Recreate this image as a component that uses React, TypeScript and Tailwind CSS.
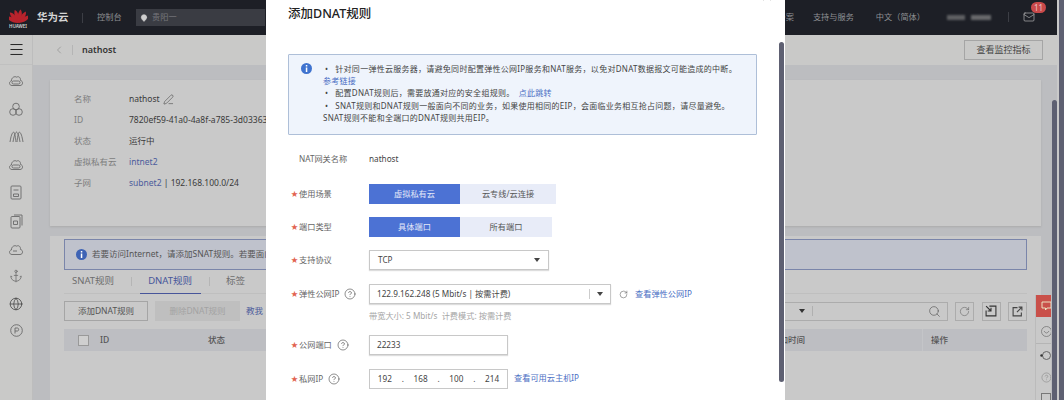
import { Anchor, ChevronLeft, CircleHelp, Globe, Mail, MapPin, Menu, PenLine, RotateCw, Search, X } from "lucide-react";

const font = "font-['Noto_Sans','Noto_Sans_CJK_SC',sans-serif]";

function HuaweiLogo() {
  const angles = [-60, -36, -12, 12, 36, 60];
  return (
    <svg width="19" height="14" viewBox="0 0 38 28">
      {angles.map((a) => (
        <path key={a} d="M19 28 C14 20 13 9 17 1 C22 3 25 16 19 28Z" fill="#b8232c" transform={`rotate(${a} 19 28)`} />
      ))}
    </svg>
  );
}

function CloudBox() {
  return (
    <svg width="16" height="14" viewBox="0 0 16 14" fill="none" stroke="#6a6a6a" strokeWidth="0.9">
      <path d="M4 11.5 C1 11.5 .6 7.5 3.4 7 C3.4 3.5 6.5 1.8 8.8 3.2 C10.3 1.8 13 3.6 12.4 6.4 C15.4 7 15.2 11.5 12 11.5Z" />
      <rect x="4" y="7" width="8" height="3" rx="1.5" />
    </svg>
  );
}

function Rings() {
  return (
    <svg width="14" height="15" viewBox="0 0 14 15" fill="none" stroke="#6a6a6a" strokeWidth="0.9">
      <circle cx="7" cy="4.5" r="3.3" />
      <circle cx="4" cy="10" r="3.3" />
      <circle cx="10" cy="10" r="3.3" />
    </svg>
  );
}

function Bridge() {
  return (
    <svg width="15" height="14" viewBox="0 0 15 14" fill="none" stroke="#6a6a6a" strokeWidth="0.9">
      <path d="M1 12 C2 6 3 3 4.5 2 C6 3 6.5 8 7 12 M4 12 C5 6 6 3 7.5 2 C9 3 10 6 11 12 M8 12 C8.5 8 9 3 10.5 2 C12 3 13 6 14 12" />
    </svg>
  );
}

function FileBox() {
  return (
    <svg width="12" height="15" viewBox="0 0 12 15" fill="none" stroke="#6a6a6a" strokeWidth="0.9">
      <rect x="1" y="1" width="10" height="13" rx="1" />
      <path d="M3.5 5 H8.5 M3.5 9 H8.5 V11.5 H3.5Z" />
    </svg>
  );
}

function FileCopy() {
  return (
    <svg width="13" height="15" viewBox="0 0 13 15" fill="none" stroke="#6a6a6a" strokeWidth="0.9">
      <rect x="1" y="2.5" width="9" height="11.5" rx="1" />
      <path d="M4 1 H12 V11.5 M3.5 7 H7.5 V10.5 H3.5Z" />
    </svg>
  );
}

function CloudLine() {
  return (
    <svg width="16" height="13" viewBox="0 0 16 13" fill="none" stroke="#6a6a6a" strokeWidth="0.9">
      <path d="M4 11.5 C1 11.5 .6 7.5 3.4 7 C3.4 3.5 6.5 1.8 8.8 3.2 C10.3 1.8 13 3.6 12.4 6.4 C15.4 7 15.2 11.5 12 11.5Z M5 8 H9" />
    </svg>
  );
}

function CircleP() {
  return (
    <svg width="13" height="13" viewBox="0 0 13 13" fill="none" stroke="#6a6a6a" strokeWidth="0.9">
      <circle cx="6.5" cy="6.5" r="5.8" />
      <path d="M5 9.5 V4 H7.5 C9 4 9 7 7.5 7 H5" />
    </svg>
  );
}

function InfoDot({ fill }: { fill: string }) {
  return (
    <svg width="11" height="11" viewBox="0 0 11 11" className="shrink-0">
      <circle cx="5.5" cy="5.5" r="5.5" fill={fill} />
      <rect x="4.8" y="2" width="1.5" height="1.5" fill="#fff" />
      <rect x="4.8" y="4.5" width="1.5" height="4.5" fill="#fff" />
    </svg>
  );
}

function Caret({ color = "#444" }: { color?: string }) {
  return <span className="inline-block w-0 h-0 border-x-[3px] border-x-transparent border-t-[4px]" style={{ borderTopColor: color }} />;
}

function Sidebar() {
  return (
    <aside className="w-[33px] shrink-0 bg-[#c9c9c8] border-r border-[#bdbdbd] flex flex-col items-center">
      <div className="h-[30px] w-full flex items-center justify-center border-b border-[#c0c0c0]">
        <Menu size={17} color="#222" strokeWidth={1.4} />
      </div>
      <div className="flex flex-col items-center gap-[13.6px] pt-[9px]">
        <CloudBox />
        <Rings />
        <Bridge />
        <CloudBox />
        <FileBox />
        <FileCopy />
        <CloudLine />
        <Anchor size={14} color="#6a6a6a" strokeWidth={1.3} />
        <Globe size={14} color="#444" strokeWidth={1.3} />
        <CircleP />
      </div>
    </aside>
  );
}

function Header() {
  return (
    <header className="h-[35px] bg-[#1d1f26] flex items-center text-[8.2px] text-[#8f9094] shrink-0">
      <div className="w-[36px] flex flex-col items-center pl-[0px] pt-[3px]">
        <HuaweiLogo />
        <span className="text-[4.5px] leading-[6px] text-[#d8d8d8] font-semibold">HUAWEI</span>
      </div>
      <span className="text-[10.5px] font-semibold text-[#d5d5d5] ml-[1px] w-[45px]">华为云</span>
      <span className="w-px h-[10px] bg-[#3c3e45]" />
      <span className="ml-[14px] w-[39px]">控制台</span>
      <div className="w-[129px] h-[17px] bg-[#3a3c43] flex items-center pl-[4px] gap-[4px]">
        <MapPin size={8} color="#cfcfcf" fill="#cfcfcf" />
        <span className="flex-1 text-[#75767b]">贵阳一</span>
      </div>
      <div className="ml-auto flex items-center">
        <span className="mr-[19px]">备案</span>
        <span className="mr-[22px]">支持与服务</span>
        <span className="mr-[22px]">中文（简体）</span>
        <span className="w-[44px] h-[5px] mr-[17px] flex gap-[6px] opacity-60">
          <span className="w-[18px] bg-[#8a8a8a] blur-[1px]" />
          <span className="w-[20px] bg-[#9a9a9a] blur-[1px]" />
        </span>
        <span className="w-px h-[10px] bg-[#3c3e45] mr-[14px]" />
        <div className="relative mr-[22px]">
          <Mail size={12} color="#c9c9c9" strokeWidth={1.2} />
          <span className="absolute -top-[9px] left-[8px] w-[15px] h-[11px] rounded-full bg-[#c9494a] text-[8px] leading-[11px] text-center text-[#eac4c4]">11</span>
        </div>
      </div>
    </header>
  );
}

function InfoRow({ label, children }: { label: string; children: React.ReactNode }) {
  return (
    <div className="flex items-center h-[21px]">
      <span className="w-[55px] text-[#7d7d7d]">{label}</span>
      <span className="text-[#3a3a3a] whitespace-nowrap">{children}</span>
    </div>
  );
}

function ToolBox({ children }: { children: React.ReactNode }) {
  return <div className="w-[19px] h-[19px] border border-[#acacac] flex items-center justify-center">{children}</div>;
}

function Background() {
  return (
    <div className="flex-1 min-w-0 flex flex-col">
      <Header />
      <div className="flex flex-1 min-h-0">
        <Sidebar />
        <main className="flex-1 min-w-0 flex flex-col bg-[#bcbdc0]">
          <div className="h-[30px] bg-[#c9c9c8] flex items-center pl-[20px] pr-[14px] shrink-0">
            <ChevronLeft size={12} color="#777" strokeWidth={1} />
            <span className="w-px h-[10px] bg-[#b5b5b5] ml-[7px] mr-[9px]" />
            <span className="text-[#333] font-semibold text-[9px]">nathost</span>
            <button className="ml-auto w-[79px] h-[20px] border border-[#a5a5a5] text-[#444] text-[9px]">查看监控指标</button>
          </div>
          <div className="flex-1 min-h-0 pl-[17px] pr-[16px] pt-[15px] overflow-hidden">
            <section className="h-[146px] bg-[#c9c9c9] pl-[24px] pt-[9px] text-[8.5px] shadow-[0_1px_2px_#aaa]">
              <InfoRow label="名称">
                <span className="inline-flex items-center gap-[3px]">nathost <PenLine size={11} strokeWidth={1.1} color="#333" /></span>
              </InfoRow>
              <InfoRow label="ID">7820ef59-41a0-4a8f-a785-3d03363</InfoRow>
              <InfoRow label="状态">运行中</InfoRow>
              <InfoRow label="虚拟私有云"><span className="text-[#4c5c9c]">intnet2</span></InfoRow>
              <InfoRow label="子网"><span className="text-[#4c5c9c]">subnet2</span> | 192.168.100.0/24</InfoRow>
            </section>
            <section className="mt-[10px] h-[200px] bg-[#c9c9c9] px-[14px] pt-[3px] text-[8.5px]">
              <div className="h-[31px] border border-[#7a85aa] bg-[#bfc2cc] flex items-center pl-[11px] gap-[5px] text-[#555]">
                <InfoDot fill="#3e63b5" />
                <span>若要访问Internet，请添加SNAT规则。若要面向</span>
              </div>
              <div className="h-[24px] flex items-center border-b border-[#bfbfbf] text-[9.5px] text-[#6e6e6e] relative">
                <span className="ml-[8px]">SNAT规则</span>
                <span className="w-px h-[9px] bg-[#b5b5b5] ml-[17px]" />
                <span className="ml-[16px] text-[#47559a]">DNAT规则</span>
                <span className="absolute left-[76px] bottom-[-1px] w-[61px] h-[1.5px] bg-[#47559a]" />
                <span className="w-px h-[9px] bg-[#b5b5b5] ml-[17px]" />
                <span className="ml-[16px]">标签</span>
              </div>
              <div className="mt-[7px] h-[20px] flex items-center">
                <button className="w-[84px] h-full border border-[#a5a5a5] text-[#555]">添加DNAT规则</button>
                <button className="w-[85px] h-full bg-[#bfbfbf] text-[#a3a3a3] ml-[7px]">删除DNAT规则</button>
                <span className="ml-[6px] text-[#4c5c9c]">教我</span>
                <div className="ml-auto flex items-center gap-[7.5px]">
                  <div className="w-[170px] h-[19px] border border-[#acacac] flex items-center pl-[20px] pr-[6px]">
                    <Caret color="#333" />
                    <span className="w-px h-[10px] bg-[#b0b0b0] ml-[7px]" />
                    <Search size={13} color="#555" strokeWidth={1.2} className="ml-auto" />
                  </div>
                  <ToolBox><RotateCw size={11} color="#666" strokeWidth={1.3} /></ToolBox>
                  <ToolBox>
                    <svg width="12" height="12" viewBox="0 0 11 11" fill="none" stroke="#333" strokeWidth="1">
                      <path d="M4 1 H10 V10 H1 V5 M1 1 L5.5 5.5 M5.5 2.5 V5.5 H2.5" />
                    </svg>
                  </ToolBox>
                  <ToolBox>
                    <svg width="11" height="11" viewBox="0 0 10 10" fill="none" stroke="#444" strokeWidth="1">
                      <path d="M5 1.5 H1 V9 H8.5 V6 M4.5 5.5 L9 1 M6 1 H9 V4" />
                    </svg>
                  </ToolBox>
                </div>
              </div>
              <div className="mt-[8px] h-[22px] bg-[#bdbec2] flex items-center text-[#555] font-medium">
                <span className="w-[11px] h-[11px] border border-[#999] bg-[#cfcfcf] ml-[14px]" />
                <span className="ml-[11px] w-[108px]">ID</span>
                <span className="w-[563px]">状态</span>
                <span className="w-[151px]">添加时间</span>
                <span className="w-px h-full bg-[#c4c5c8] mr-[8px]" />
                <span>操作</span>
              </div>
            </section>
          </div>
        </main>
      </div>
    </div>
  );
}

function Star() {
  return <span className="absolute left-[-8px] text-[#e2634f] text-[7px]">★</span>;
}

function FormRow({ label, help, mt, children }: { label: string; help?: boolean; mt: string; children: React.ReactNode }) {
  return (
    <div className={`flex items-center h-[20px] ${mt}`}>
      <div className="w-[70px] shrink-0 relative flex items-center gap-[5px] text-[#666]">
        <Star />
        <span>{label}</span>
        {help && <CircleHelp size={12} color="#444" strokeWidth={1.2} />}
      </div>
      {children}
    </div>
  );
}

function Segments({ left, right, rightWidth }: { left: string; right: string; rightWidth: string }) {
  return (
    <div className="flex h-full">
      <span className="w-[91px] bg-[#4c72d4] text-[#e4e9f8] flex items-center justify-center">{left}</span>
      <span className={`${rightWidth} bg-[#e8ecf8] text-[#555] flex items-center justify-center`}>{right}</span>
    </div>
  );
}

function Modal() {
  return (
    <div className="absolute left-[266px] top-0 bottom-0 w-[519px] bg-white text-[8.2px] text-[#444] pl-[22px]">
      <X size={12} color="#555" strokeWidth={1.2} className="absolute left-[495px] -top-[9px]" />
      <div className="absolute right-[1px] top-[42px] h-[340px] w-[5px] rounded-[3px] bg-[#5e6072]" />
      <h2 className="text-[12.5px] leading-[18px] pt-[5px] font-medium text-[#222] h-[54px]">添加DNAT规则</h2>
      <div className="w-[469px] h-[81px] border border-[#aebfd8] bg-[#eff4fc] pt-[8px] pl-[12px] flex gap-[11px] leading-[12.2px] rounded-[1px] text-[8px] tracking-[0.27px]">
        <InfoDot fill="#3f73cf" />
        <ul className="text-[#444] whitespace-nowrap">
          <li className="pl-[2px]">•&nbsp;&nbsp; 针对同一弹性云服务器，请避免同时配置弹性公网IP服务和NAT服务，以免对DNAT数据报文可能造成的中断。</li>
          <li className="text-[#4c6fc4]">参考链接</li>
          <li className="pl-[2px]">•&nbsp;&nbsp; 配置DNAT规则后，需要放通对应的安全组规则。 <span className="text-[#4c6fc4] ml-[2px]">点此跳转</span></li>
          <li className="pl-[2px]">•&nbsp;&nbsp; SNAT规则和DNAT规则一般面向不同的业务，如果使用相同的EIP，会面临业务相互抢占问题，请尽量避免。</li>
          <li>SNAT规则不能和全端口的DNAT规则共用EIP。</li>
        </ul>
      </div>
      <div className="flex items-center h-[20px] mt-[14px] pl-[11px]">
        <span className="w-[70px] text-[#666]">NAT网关名称</span>
        <span>nathost</span>
      </div>
      <div className="pl-[11px]">
        <FormRow label="使用场景" mt="mt-[15px]">
          <Segments left="虚拟私有云" right="云专线/云连接" rightWidth="w-[96px]" />
        </FormRow>
        <FormRow label="端口类型" mt="mt-[13px]">
          <Segments left="具体端口" right="所有端口" rightWidth="w-[92px]" />
        </FormRow>
        <FormRow label="支持协议" mt="mt-[13px]">
          <div className="w-[180px] h-full border border-[#c8c8c8] flex items-center justify-between pl-[8px] pr-[8px] shadow-[0_1px_1px_#ddd]">
            <span>TCP</span>
            <Caret />
          </div>
        </FormRow>
        <FormRow label="弹性公网IP" help mt="mt-[14px]">
          <div className="w-[242px] h-full border border-[#c8c8c8] flex items-center pl-[7px] pr-[7px] shadow-[0_1px_1px_#ddd]">
            <span>122.9.162.248 (5 Mbit/s | 按需计费)</span>
            <span className="ml-auto w-px h-[10px] bg-[#ccc] mr-[7px]" />
            <Caret />
          </div>
          <RotateCw size={9} color="#555" strokeWidth={1.4} className="ml-[8px]" />
          <span className="ml-[7px] text-[#4c6fc4]">查看弹性公网IP</span>
        </FormRow>
        <div className="h-[20px] mt-[2px] pl-[70px] flex items-center text-[#a5a5a5]">带宽大小: 5 Mbit/s&nbsp; 计费模式: 按需计费</div>
        <FormRow label="公网端口" help mt="mt-[9px]">
          <div className="w-[139px] h-full border border-[#c8c8c8] flex items-center pl-[7px] shadow-[0_1px_1px_#ddd]">22233</div>
        </FormRow>
        <FormRow label="私网IP" help mt="mt-[14px]">
          <div className="w-[139px] h-full border border-[#c8c8c8] flex items-center justify-around px-[3px]">
            <span>192</span><span>.</span><span>168</span><span>.</span><span>100</span><span>.</span><span>214</span>
          </div>
          <span className="ml-[6px] text-[#4c6fc4] -mt-[1px]">查看可用云主机IP</span>
        </FormRow>
      </div>
    </div>
  );
}

function FloatPanel() {
  return (
    <div className="absolute left-[1035px] top-[295px] w-[16px] flex flex-col items-start bg-[#c9c9c9] border-l border-[#bbb] overflow-hidden">
      <div className="w-full h-[22px] bg-[#c9504a] flex items-center pl-[5px]">
        <svg width="11" height="10" viewBox="0 0 11 10" fill="none" stroke="#eec" strokeWidth="0.9" className="shrink-0">
          <path d="M1 1 H10 V7 H6 L4.5 9 V7 H1Z" />
        </svg>
      </div>
      <svg width="11" height="11" viewBox="0 0 11 11" fill="none" stroke="#777" strokeWidth="0.8" className="mt-[9px] ml-[5px] shrink-0">
        <circle cx="5.5" cy="5.5" r="5" />
        <path d="M3 5 Q5.5 9 8 5" />
      </svg>
      <span className="w-full h-px bg-[#b5b5b5] mt-[6px]" />
      <svg width="12" height="11" viewBox="0 0 12 11" className="mt-[6px] ml-[4px] shrink-0" fill="none" stroke="#666" strokeWidth="1">
        <circle cx="6.5" cy="5.5" r="4" />
        <circle cx="1.5" cy="5.5" r="1.2" fill="#333" stroke="none" />
      </svg>
      <CircleHelp size={11} color="#777" strokeWidth={1} className="mt-[11px] ml-[5px] shrink-0" />
      <span className="w-[10px] h-[11px] border border-[#777] mt-[10px] ml-[5px] shrink-0" />
    </div>
  );
}

export default function App() {
  return (
    <div className={`relative w-[1064px] h-[400px] overflow-hidden bg-[#c9c9c9] flex ${font}`}>
      <Background />
      <div className="w-[7px] shrink-0 bg-[#c9c9c9] pl-[2px]">
        <div className="w-[5px] h-full bg-[#5e6072]" />
      </div>
      <Modal />
      <FloatPanel />
      <div className="absolute left-[1052px] top-[100px] bottom-0 w-[5px] bg-[#5e6072] rounded-t-[3px]" />
    </div>
  );
}
